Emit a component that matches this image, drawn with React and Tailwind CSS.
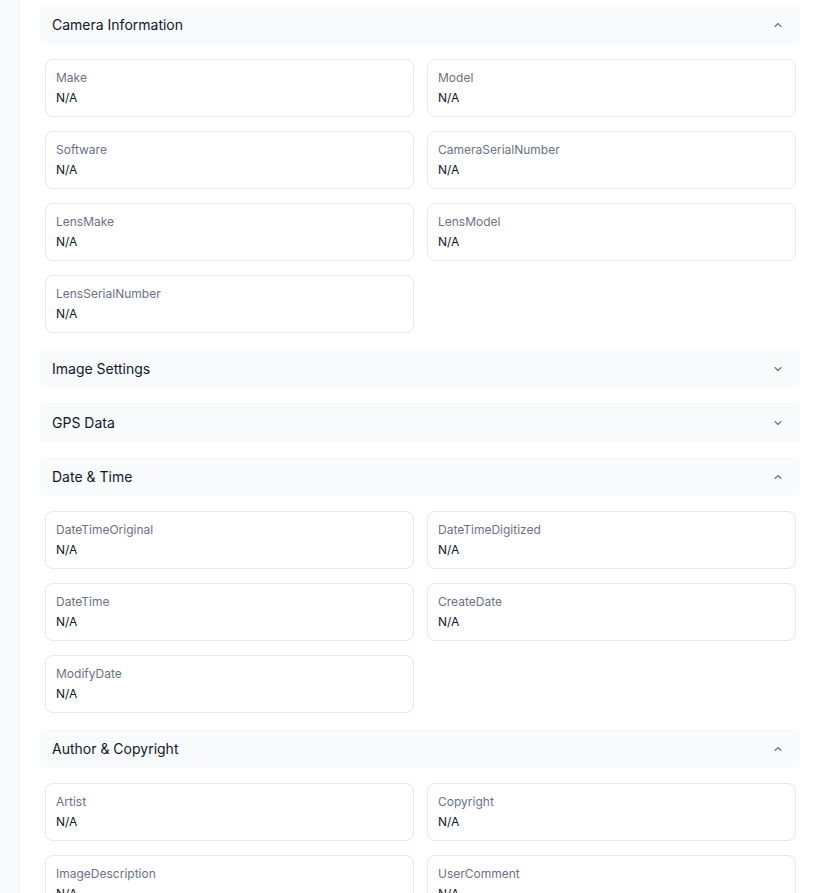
import React from "react";

const Chevron = ({ up }) => (
  <svg width="12" height="12" viewBox="0 0 24 24" fill="none" stroke="#6b7280" strokeWidth="2.25" strokeLinecap="round" strokeLinejoin="round">
    {up ? <path d="m18 15-6-6-6 6" /> : <path d="m6 9 6 6 6-6" />}
  </svg>
);

const sections = [
  { title: "Camera Information", open: true, fields: ["Make", "Model", "Software", "CameraSerialNumber", "LensMake", "LensModel", "LensSerialNumber"] },
  { title: "Image Settings", open: false, fields: [] },
  { title: "GPS Data", open: false, fields: [] },
  { title: "Date & Time", open: true, fields: ["DateTimeOriginal", "DateTimeDigitized", "DateTime", "CreateDate", "ModifyDate"] },
  { title: "Author & Copyright", open: true, fields: ["Artist", "Copyright", "ImageDescription", "UserComment"] },
];

export default function App() {
  return (
    <div className="flex min-h-[893px] bg-[#f8f9fa]" style={{ fontFamily: "Inter, 'Noto Sans', sans-serif" }}>
      <div className="w-5 shrink-0" />
      <div className="flex-1 bg-white shadow-[-1px_0_3px_rgba(0,0,0,0.04)] pl-5 pr-[19px] pt-[5px] pb-10">
        <div className="flex flex-col gap-[15px]">
          {sections.map((s) => (
            <div key={s.title} className="flex flex-col gap-[15px]">
              <div className="flex h-[39px] items-center justify-between rounded-md bg-[#f8fafc] pl-3 pr-4">
                <span className="text-sm font-normal text-[#111827]">{s.title}</span>
                <Chevron up={s.open} />
              </div>
              {s.open && (
                <div className="mb-px grid grid-cols-2 gap-x-[13px] gap-y-[14px] pl-[5px] pr-1">
                  {s.fields.map((f) => (
                    <div key={f} className="rounded-lg border border-[#e5e7eb] bg-white px-2.5 pt-2.5 pb-2">
                      <div className="mb-0.5 text-xs leading-4 text-[#6b7280]">{f}</div>
                      <div className="text-xs leading-5 text-[#111827]">N/A</div>
                    </div>
                  ))}
                </div>
              )}
            </div>
          ))}
        </div>
      </div>
    </div>
  );
}
